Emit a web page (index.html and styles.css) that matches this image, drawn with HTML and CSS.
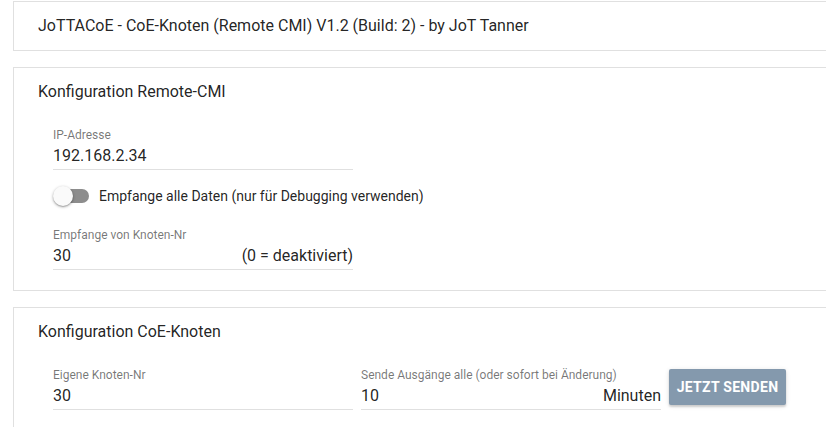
FILE: index.html
```html
<!DOCTYPE html>
<html lang="de">
<head>
<meta charset="utf-8">
<title>JoTTACoE</title>
<link rel="stylesheet" href="styles.css">
</head>
<body>
<main class="page">
  <section class="card card-head">
    <h1 class="head-title">JoTTACoE - CoE-Knoten (Remote CMI) V1.2 (Build: 2) - by JoT Tanner</h1>
  </section>

  <section class="card">
    <h2 class="card-title">Konfiguration Remote-CMI</h2>
    <div class="card-body">
      <div class="field">
        <label class="field-label">IP-Adresse</label>
        <div class="field-input"><span class="value">192.168.2.34</span></div>
      </div>
      <div class="switch-row">
        <span class="switch"><span class="track"></span><span class="thumb"></span></span>
        <span class="switch-label">Empfange alle Daten (nur für Debugging verwenden)</span>
      </div>
      <div class="field">
        <label class="field-label">Empfange von Knoten-Nr</label>
        <div class="field-input"><span class="value">30</span><span class="suffix">(0 = deaktiviert)</span></div>
      </div>
    </div>
  </section>

  <section class="card">
    <h2 class="card-title">Konfiguration CoE-Knoten</h2>
    <div class="card-body">
      <div class="row">
        <div class="field">
          <label class="field-label">Eigene Knoten-Nr</label>
          <div class="field-input"><span class="value">30</span></div>
        </div>
        <div class="field">
          <label class="field-label">Sende Ausgänge alle (oder sofort bei Änderung)</label>
          <div class="field-input"><span class="value">10</span><span class="suffix">Minuten</span></div>
        </div>
        <button class="btn" type="button">JETZT SENDEN</button>
      </div>
    </div>
  </section>
</main>
</body>
</html>
```
FILE: styles.css
```css
html, body {
  margin: 0;
  padding: 0;
  background: #ffffff;
  overflow: hidden;
}
body {
  font-family: Roboto, "Noto Sans", Arial, sans-serif;
  color: rgba(0, 0, 0, 0.87);
}
.page {
  padding: 1px 0 0 13px;
  display: flex;
  flex-direction: column;
  gap: 16px;
  width: 840px;
}
.card {
  border: 1px solid #e0e0e0;
  background: #fff;
}
.card-head {
  height: 48px;
  display: flex;
  align-items: center;
  padding: 0 24px;
}
.head-title {
  margin: 0;
  font-size: 16px;
  font-weight: 400;
  line-height: 24px;
}
.card-title {
  margin: 0;
  padding: 12px 24px 0;
  font-size: 16px;
  font-weight: 400;
  line-height: 24px;
}
.card-body {
  padding: 23px 0 20px 39px;
  display: flex;
  flex-direction: column;
}
.field {
  width: 300px;
  display: flex;
  flex-direction: column;
}
.field-label {
  font-size: 12px;
  line-height: 16px;
  color: rgba(0, 0, 0, 0.54);
}
.field-input {
  display: flex;
  justify-content: space-between;
  align-items: baseline;
  font-size: 16px;
  line-height: 24px;
  padding: 1px 0 1px;
  border-bottom: 1px solid #e0e0e0;
}
.switch-row {
  display: flex;
  align-items: center;
  height: 24px;
  margin: 14px 0 19px;
}
.switch {
  position: relative;
  width: 36px;
  height: 24px;
  margin-right: 10px;
  flex: none;
}
.track {
  position: absolute;
  left: 1px;
  top: 5px;
  width: 35px;
  height: 14px;
  border-radius: 7px;
  background: #8d8d8d;
}
.thumb {
  position: absolute;
  left: 0;
  top: 2px;
  width: 20px;
  height: 20px;
  border-radius: 50%;
  background: #fafafa;
  box-shadow: 0 1px 3px rgba(0, 0, 0, 0.35), 0 1px 1px rgba(0, 0, 0, 0.14);
}
.switch-label {
  font-size: 14px;
  line-height: 20px;
}
.row {
  display: flex;
  align-items: flex-start;
  gap: 8px;
}
.btn {
  margin-top: 2px;
  width: 117px;
  height: 36px;
  padding: 0;
  border: none;
  border-radius: 2px;
  background: #8499ad;
  color: #fff;
  font-family: Roboto, Arial, sans-serif;
  font-size: 14px;
  font-weight: 700;
  letter-spacing: 0.3px;
  white-space: nowrap;
  box-shadow: 0 2px 2px rgba(0, 0, 0, 0.14), 0 1px 5px rgba(0, 0, 0, 0.12);
}
```
